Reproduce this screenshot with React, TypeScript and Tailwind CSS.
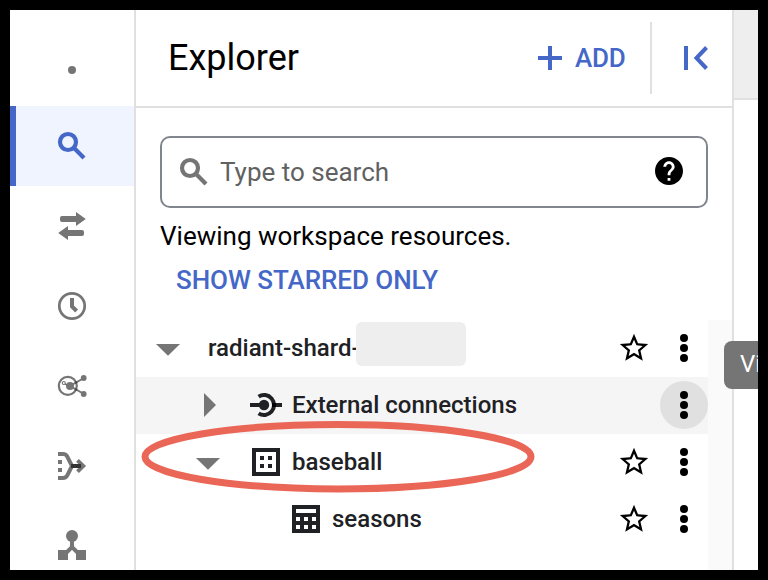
import type { ReactNode } from "react";

const GRAY = "#757575";
const BLUE = "#4467c8";

function NavItem({ active = false, box, children }: { active?: boolean; box: string; children: ReactNode }) {
  return (
    <div
      className={
        active
          ? "flex h-20 shrink-0 items-center border-l-6 border-[#4467c8] bg-[#eff4ff] pl-[38px]"
          : "flex h-20 shrink-0 items-center pl-11"
      }
    >
      <svg className="size-9" viewBox={box}>
        {children}
      </svg>
    </div>
  );
}

function SearchGlyph({ x, y, color }: { x: number; y: number; color: string }) {
  return (
    <g transform={`translate(${x} ${y})`} fill="none" stroke={color} strokeWidth="4.2">
      <circle cx="10" cy="10" r="8" />
      <path d="M15.6 15.6L26 26" />
    </g>
  );
}

function Sidebar() {
  return (
    <nav className="flex w-[126px] shrink-0 flex-col overflow-hidden border-r-2 border-[#e0e0e0] pt-4">
      <NavItem box="54 48 36 36">
        <circle cx="72" cy="70" r="4" fill={GRAY} />
      </NavItem>
      <NavItem active box="54 128 36 36">
        <SearchGlyph x={58} y={132} color={BLUE} />
      </NavItem>
      <NavItem box="54 208 36 36">
        <g fill={GRAY}>
          <path d="M62 216H76V212L85.8 219L76 226V222H62Q60 222 60 220V218Q60 216 62 216Z" />
          <path d="M82 230H68V226L58.2 233L68 240V236H82Q84 236 84 234V232Q84 230 82 230Z" />
        </g>
      </NavItem>
      <NavItem box="54 288 36 36">
        <g fill="none" stroke={GRAY}>
          <circle cx="72" cy="306" r="12.7" strokeWidth="2.7" />
          <path d="M72 298V306.4L76.6 311" strokeWidth="4" />
        </g>
      </NavItem>
      <NavItem box="54 368 36 36">
        <g fill="none" stroke={GRAY}>
          <circle cx="67.8" cy="385.8" r="9" strokeWidth="2.2" />
          <path d="M84 378L70 386L84 394" strokeWidth="2" />
          <circle cx="63.8" cy="383" r="1.5" strokeWidth="1.1" />
          <path d="M65 384L68 385" stroke="#444" strokeWidth="1.3" />
        </g>
        <g fill={GRAY}>
          <circle cx="70" cy="386" r="4" />
          <circle cx="83.7" cy="378" r="2.9" />
          <circle cx="83.7" cy="394" r="2.9" />
        </g>
        <g fill="#4a4a4a">
          <circle cx="76" cy="382.5" r="1.3" />
          <circle cx="76" cy="389.5" r="1.3" />
        </g>
      </NavItem>
      <NavItem box="54 448 36 36">
        <g fill="none" stroke={GRAY} strokeWidth="4">
          <path d="M58 454H63Q66 454 67.3 456.6L72 466L67.3 475.4Q66 478 63 478H58" />
          <path d="M77.5 460.3L83.2 466L77.5 471.7" />
        </g>
        <path d="M58 460h4v4h-4zM58 468h4v4h-4z" fill={GRAY} />
        <path d="M71 466H81" stroke="#333" strokeWidth="4" />
      </NavItem>
      <NavItem box="54 528 36 36">
        <g fill={GRAY}>
          <circle cx="72" cy="536" r="6" />
          <path d="M58 550h10v10h-10zM76 550h10v10h-10z" />
        </g>
        <path d="M72 540V547M64.5 554.5L72 547L79.5 554.5" fill="none" stroke={GRAY} strokeWidth="4" />
      </NavItem>
    </nav>
  );
}

function Header() {
  return (
    <header className="flex h-[98px] shrink-0 items-center border-b-2 border-[#e0e0e0] pl-8">
      <h1 className="w-[370px] text-[36px] leading-none">Explorer</h1>
      <svg className="size-6" viewBox="0 0 24 24">
        <path d="M12 0V24M0 12H24" stroke={BLUE} strokeWidth="4" />
      </svg>
      <span className="ml-[13px] w-[75px] text-[26px] leading-none font-medium tracking-[-0.2px] text-[#4467c8]">ADD</span>
      <div className="h-[72px] w-0.5 bg-[#e0e0e0]" />
      <svg className="ml-8 h-6 w-[26px]" viewBox="684 46 26 24">
        <path d="M686 46V70M706.5 47.5L696.5 58L706.5 68.5" fill="none" stroke={BLUE} strokeWidth="4" />
      </svg>
    </header>
  );
}

function SearchBox() {
  return (
    <div className="mx-6 mt-7 flex h-[72px] shrink-0 items-center rounded-[10px] border-2 border-[#80868b] pl-[17px]">
      <svg className="size-8" viewBox="179 156 32 32">
        <SearchGlyph x={180} y={158} color={GRAY} />
      </svg>
      <span className="ml-[9px] grow text-[26px] leading-none text-[#616161]">Type to search</span>
      <svg className="mr-5 h-[34px] w-[34px]" viewBox="652 155 34 34">
        <path
          transform="translate(652.2 154.2) scale(1.4)"
          d="M12 2C6.48 2 2 6.48 2 12s4.48 10 10 10 10-4.48 10-10S17.52 2 12 2zm1 17h-2v-2h2v2zm2.07-7.75l-.9.92C13.45 12.9 13 13.5 13 15h-2v-.5c0-1.1.45-2.1 1.17-2.83l1.24-1.26c.37-.36.59-.86.59-1.41 0-1.1-.9-2-2-2s-2 .9-2 2H8c0-2.21 1.79-4 4-4s4 1.79 4 4c0 .88-.36 1.68-.93 2.25z"
        />
      </svg>
    </div>
  );
}

function RowActions({ star = true, hover = false }: { star?: boolean; hover?: boolean }) {
  return (
    <svg className="ml-auto h-[57px] w-24 shrink-0" viewBox="612 320 96 57">
      {star && (
        <path
          transform="translate(617 331) scale(1.417)"
          d="M22 9.24l-7.19-.62L12 2 9.19 8.63 2 9.24l5.46 4.73L5.82 21 12 17.27 18.18 21l-1.63-7.03L22 9.24zM12 15.4l-3.76 2.27 1-4.28-3.32-2.88 4.38-.38L12 6.1l1.71 4.04 4.38.38-3.32 2.88 1 4.28L12 15.4z"
        />
      )}
      {hover && <circle cx="684" cy="348" r="24" fill="#e0e0e0" />}
      <circle cx="684" cy="338" r="4" />
      <circle cx="684" cy="348" r="4" />
      <circle cx="684" cy="358" r="4" />
    </svg>
  );
}

function Caret({ open }: { open: boolean }) {
  return (
    <svg className="h-[57px] w-6 shrink-0" viewBox="0 0 24 57">
      <path d={open ? "M0 24H24L12 35.7Z" : "M8 16L20 28L8 40Z"} fill={GRAY} />
    </svg>
  );
}

function Tree() {
  return (
    <div className="mt-[21px] flex grow">
      <div className="flex grow flex-col text-[24px] leading-[56px] font-medium text-[#202124]">
        <div className="flex h-[57px] pl-5">
          <Caret open />
          <span className="ml-7 w-[148px] whitespace-nowrap">radiant-shard-</span>
          <div className="mt-0.5 h-11 w-[110px] rounded-md bg-[#eeeeee]" />
          <RowActions />
        </div>
        <div className="flex h-[57px] bg-[#f5f5f5] pl-[60px]">
          <Caret open={false} />
          <svg className="ml-[30px] h-[57px] w-8 shrink-0" viewBox="250 377 32 57">
            <g fill="none" stroke="#202124" strokeWidth="4">
              <path d="M250 405H264M274 405H282" />
              <path d="M258.6 396.6A10 10 0 1 1 258.6 413.4" />
            </g>
            <circle cx="264" cy="405" r="5.2" fill="#202124" />
            <path d="M272 405h4" stroke="#000" strokeWidth="4" />
          </svg>
          <span className="ml-2.5 whitespace-nowrap">External connections</span>
          <RowActions star={false} hover />
        </div>
        <div className="flex h-[57px] pl-[60px]">
          <Caret open />
          <svg className="ml-8 h-[57px] w-7 shrink-0" viewBox="252 434 28 57">
            <rect x="254" y="450" width="24" height="24" fill="none" stroke="#202124" strokeWidth="4" />
            <path d="M260 456h4v4h-4zM268 456h4v4h-4zM260 464h4v4h-4zM268 464h4v4h-4z" fill="#202124" />
          </svg>
          <span className="ml-3">baseball</span>
          <RowActions />
        </div>
        <div className="flex h-[57px] pl-[156px]">
          <svg className="h-[57px] w-7 shrink-0" viewBox="292 491 28 57">
            <rect x="292" y="505" width="28" height="28" fill="#202124" />
            <path
              d="M296 509h20v4h-20zM296 517h4v4h-4zM304 517h4v4h-4zM312 517h4v4h-4zM296 525h4v4h-4zM304 525h4v4h-4zM312 525h4v4h-4z"
              fill="#fff"
            />
          </svg>
          <span className="ml-3">seasons</span>
          <RowActions />
        </div>
      </div>
      <div className="w-6 shrink-0 bg-[#fafafa]" />
    </div>
  );
}

export default function App() {
  return (
    <div className="h-[580px] w-[768px] bg-black p-2.5 font-[Roboto,sans-serif] text-black">
      <div className="relative flex h-[560px] w-[748px] overflow-hidden bg-white">
        <Sidebar />
        <main className="flex w-[598px] shrink-0 flex-col border-r-2 border-[#e0e0e0]">
          <Header />
          <SearchBox />
          <p className="mt-[13px] ml-6 h-[30px] text-[26px] leading-[30px]">Viewing workspace resources.</p>
          <button className="mt-[14px] ml-10 flex h-[34px] items-start self-start text-[26px] leading-[30px] font-medium tracking-[-0.05px] whitespace-nowrap text-[#4467c8]">
            SHOW STARRED ONLY
          </button>
          <Tree />
        </main>
        <div className="grow">
          <div className="h-[90px] border-b-2 border-[#e0e0e0] bg-[#eeeeee]" />
        </div>
        <div className="absolute top-[331px] left-[714px] h-12 w-24 rounded-lg bg-[#757575] pl-4 text-[24px] leading-[47px] text-white">
          Vi
        </div>
        <svg className="pointer-events-none absolute top-[406px] left-[126px] h-20 w-[404px]" viewBox="136 416 404 80">
          <ellipse cx="338" cy="456.7" rx="193" ry="32.2" fill="none" stroke="#ea6758" strokeWidth="7" />
        </svg>
      </div>
    </div>
  );
}
